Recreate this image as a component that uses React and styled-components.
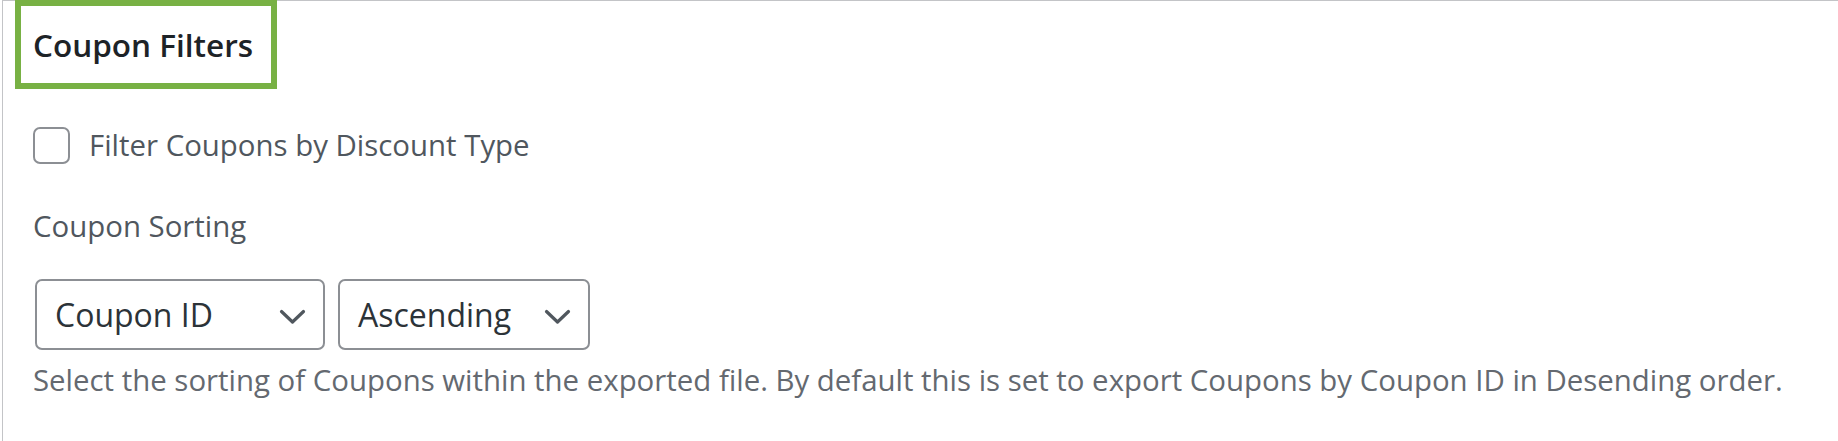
import React from 'react';
import styled, { createGlobalStyle } from 'styled-components';

const GlobalStyle = createGlobalStyle`
  html, body {
    margin: 0;
    padding: 0;
    background: #fff;
  }
  body {
    font-family: "Open Sans", "Noto Sans", "Liberation Sans", sans-serif;
    color: #3c434a;
  }
`;

const Panel = styled.div`
  margin-left: 2px;
  min-height: 100vh;
  box-sizing: border-box;
  border-top: 1px solid #c3c4c7;
  border-left: 1px solid #c3c4c7;
  background: #fff;
`;

const Heading = styled.h2`
  display: inline-block;
  margin: -1px 0 0 12px;
  padding: 4px 18px 0 12px;
  height: 73px;
  border: 6px solid #78b144;
  font-size: 31.5px;
  font-weight: 600;
  line-height: 70px;
  color: #1d2327;
`;

const Body = styled.div`
  padding: 0 0 0 30px;
`;

const CheckRow = styled.label`
  display: flex;
  align-items: center;
  gap: 19px;
  margin-top: 38px;
  font-size: 29.4px;
  line-height: 37px;
  color: #50575e;
`;

const Checkbox = styled.span`
  width: 37px;
  height: 37px;
  box-sizing: border-box;
  border: 2px solid #8c8f94;
  border-radius: 7px;
  background: #fff;
`;

const FieldLabel = styled.div`
  margin-top: 42px;
  font-size: 29.4px;
  line-height: 40px;
  color: #50575e;
`;

const SelectRow = styled.div`
  display: flex;
  gap: 13px;
  margin: 33px 0 0 2px;
`;

const Select = styled.div`
  display: flex;
  align-items: center;
  justify-content: space-between;
  box-sizing: border-box;
  width: ${({ $width }) => $width}px;
  height: 71px;
  padding: 0 17px 0 18px;
  border: 2px solid #8c8f94;
  border-radius: 7px;
  font-size: 32px;
  color: #2c3338;
`;

const Chevron = styled.svg`
  width: 27px;
  height: 16px;
  margin-top: 5px;
  flex-shrink: 0;
`;

const Description = styled.p`
  margin: 10px 0 0;
  font-size: 29.4px;
  line-height: 40px;
  color: #646970;
`;

function Dropdown({ width, children }) {
  return (
    <Select $width={width}>
      <span>{children}</span>
      <Chevron viewBox="0 0 27 16">
        <path d="M2.5 2.5 L13.5 13 L24.5 2.5" fill="none" stroke="#50575e" strokeWidth="3.2" strokeLinecap="round" strokeLinejoin="round" />
      </Chevron>
    </Select>
  );
}

export default function App() {
  return (
    <>
      <GlobalStyle />
      <Panel>
        <Heading>Coupon Filters</Heading>
        <Body>
          <CheckRow>
            <Checkbox />
            Filter Coupons by Discount Type
          </CheckRow>
          <FieldLabel>Coupon Sorting</FieldLabel>
          <SelectRow>
            <Dropdown width={290}>Coupon ID</Dropdown>
            <Dropdown width={252}>Ascending</Dropdown>
          </SelectRow>
          <Description>
            Select the sorting of Coupons within the exported file. By default this is set to export Coupons by Coupon ID in Desending order.
          </Description>
        </Body>
      </Panel>
    </>
  );
}
